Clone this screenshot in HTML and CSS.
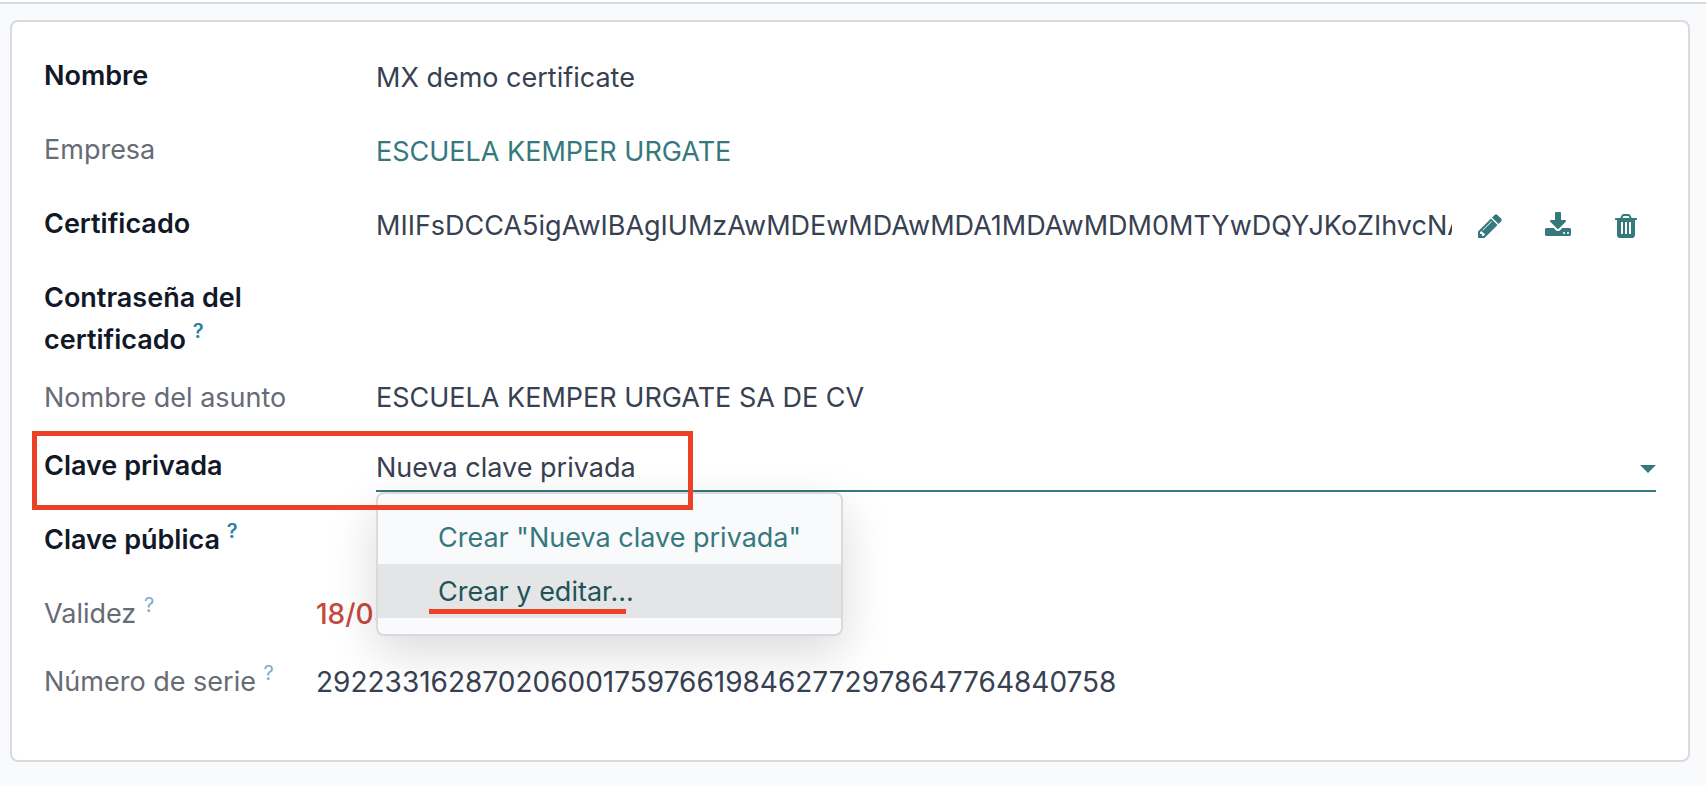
FILE: index.html
```html
<!DOCTYPE html>
<html lang="es">
<head>
<meta charset="utf-8">
<title>Certificado</title>
<link rel="stylesheet" href="styles.css">
</head>
<body>
<header class="topbar"></header>
<main class="sheet">
  <form class="form">
    <div class="row">
      <label class="label strong" for="name">Nombre</label>
      <input class="field" id="name" type="text" value="MX demo certificate">
    </div>
    <div class="row">
      <label class="label" for="company">Empresa</label>
      <input class="field link" id="company" type="text" value="ESCUELA KEMPER URGATE">
    </div>
    <div class="row">
      <label class="label strong" for="cert">Certificado</label>
      <div class="file">
        <input class="field" id="cert" type="text" readonly value="MIIFsDCCA5igAwIBAgIUMzAwMDEwMDAwMDA1MDAwMDM0MTYwDQYJKoZIhvcNAQELBQAwggEr">
        <button class="icon-btn" type="button" aria-label="Editar">
          <svg viewBox="0 0 1792 1792"><path d="M491 1536l91-91-235-235-91 91v107h128v128h107zm523-928q0-22-22-22-10 0-17 7l-542 542q-7 7-7 17 0 22 22 22 10 0 17-7l542-542q7-7 7-17zm-54-192l416 416-832 832h-416v-416zm683 96q0 53-37 90l-166 166-416-416 166-165q36-38 90-38 53 0 91 38l235 234q37 39 37 91z"/></svg>
        </button>
        <button class="icon-btn" type="button" aria-label="Descargar">
          <svg viewBox="0 0 1792 1792"><path d="M1344 1344q0-26-19-45t-45-19-45 19-19 45 19 45 45 19 45-19 19-45zm256 0q0-26-19-45t-45-19-45 19-19 45 19 45 45 19 45-19 19-45zm128-224v320q0 40-28 68t-68 28h-1472q-40 0-68-28t-28-68v-320q0-40 28-68t68-28h465l135 136q58 56 136 56t136-56l136-136h464q40 0 68 28t28 68zm-325-569q17 41-14 70l-448 448q-18 19-45 19t-45-19l-448-448q-31-29-14-70 17-39 59-39h256v-448q0-26 19-45t45-19h256q26 0 45 19t19 45v448h256q42 0 59 39z"/></svg>
        </button>
        <button class="icon-btn" type="button" aria-label="Borrar">
          <svg viewBox="0 0 1792 1792"><path d="M704 1376v-704q0-14-9-23t-23-9h-64q-14 0-23 9t-9 23v704q0 14 9 23t23 9h64q14 0 23-9t9-23zm256 0v-704q0-14-9-23t-23-9h-64q-14 0-23 9t-9 23v704q0 14 9 23t23 9h64q14 0 23-9t9-23zm256 0v-704q0-14-9-23t-23-9h-64q-14 0-23 9t-9 23v704q0 14 9 23t23 9h64q14 0 23-9t9-23zm-544-992h448l-48-117q-7-9-17-11h-317q-10 2-17 11zm928 32v64q0 14-9 23t-23 9h-96v948q0 83-47 143.500t-113 60.500h-832q-66 0-113-58.500t-47-141.500v-952h-96q-14 0-23-9t-9-23v-64q0-14 9-23t23-9h309l70-167q15-37 54-63t79-26h320q40 0 79 26t54 63l70 167h309q14 0 23 9t9 23z"/></svg>
        </button>
      </div>
    </div>
    <div class="row">
      <label class="label strong" for="pass">Contraseña del certificado <sup class="help">?</sup></label>
      <input class="field" id="pass" type="password">
    </div>
    <div class="row readonly">
      <span class="label">Nombre del asunto</span>
      <span class="value">ESCUELA KEMPER URGATE SA DE CV</span>
    </div>
    <div class="row">
      <label class="label strong" for="privkey">Clave privada</label>
      <div class="combo">
        <input class="field active" id="privkey" type="text" role="combobox" aria-expanded="true" aria-controls="options" value="Nueva clave privada">
        <svg class="caret" viewBox="0 0 16 8"><path d="M0 0h16L8 8z"/></svg>
        <div class="menu" id="options">
          <button class="option" type="button">Crear "Nueva clave privada"</button>
          <button class="option hover" type="button">Crear y editar...<span class="mark-line"></span></button>
        </div>
      </div>
      <div class="mark-box"></div>
    </div>
    <div class="row">
      <label class="label strong" for="pubkey">Clave pública <sup class="help">?</sup></label>
      <input class="field" id="pubkey" type="text">
    </div>
    <div class="row readonly compact">
      <span class="label">Validez <sup class="help">?</sup></span>
      <span class="value number expired">18/05</span>
    </div>
    <div class="row readonly compact">
      <span class="label">Número de serie <sup class="help">?</sup></span>
      <span class="value number">292233162870206001759766198462772978647764840758</span>
    </div>
  </form>
</main>
</body>
</html>
```
FILE: styles.css
```css
* { box-sizing: border-box; }

body {
  margin: 0;
  background: #f9fafc;
  color: #374151;
  font: 400 27px/42px Inter, "Liberation Sans", sans-serif;
}

.topbar {
  height: 4px;
  background: #fff;
  border-bottom: 2px solid #d8dadd;
}

.sheet {
  margin: 16px 16px 24px 10px;
  padding: 33px 32px 47px;
  background: #fff;
  border: 2px solid #d8dadd;
  border-radius: 8px;
}

.form {
  display: flex;
  flex-direction: column;
  gap: 16px;
}

.row {
  position: relative;
  display: grid;
  grid-template-columns: 332px minmax(0, 1fr);
  align-items: start;
  min-height: 58px;
}

.row.readonly { min-height: 52px; }
.row.compact { grid-template-columns: 272px minmax(0, 1fr); }

.label {
  padding-right: 32px;
  color: #666b75;
}

.compact .label { padding-right: 0; }

.label.strong {
  color: #111827;
  font-weight: 600;
}

.help {
  color: #7aafc8;
  font-size: 20px;
  line-height: 0;
  vertical-align: 11px;
}

.strong .help { color: #2f80a8; }

.field {
  display: block;
  width: 100%;
  min-width: 0;
  height: 47px;
  padding: 1px 0 2px;
  border: 0;
  border-bottom: 2px solid transparent;
  border-radius: 0;
  outline: 0;
  background: transparent;
  color: inherit;
  font: inherit;
}

.field.link { color: #35797d; }
.field.active { border-color: #35797d; }
.value.number { font-size: 28px; }
.value.expired { color: #c4493f; font-weight: 500; }

.file { display: flex; align-items: flex-start; }

.icon-btn {
  flex: none;
  padding: 9px 16px 9px 24px;
  border: 0;
  background: none;
  line-height: 0;
  cursor: pointer;
}

.icon-btn svg {
  width: 28px;
  height: 28px;
  fill: #35797d;
}

.combo { position: relative; }

.caret {
  position: absolute;
  top: 20px;
  right: 0;
  width: 16px;
  height: 8px;
  fill: #35797d;
}

.menu {
  position: absolute;
  z-index: 1;
  top: 100%;
  left: 0;
  min-width: 467px;
  padding: 16px 0;
  background: #f9fafc;
  border: 2px solid #d8dadd;
  border-radius: 8px;
  box-shadow: 0 16px 48px rgba(0, 0, 0, 0.15);
}

.option {
  position: relative;
  display: block;
  width: 100%;
  padding: 7px 32px 5px 60px;
  border: 0;
  background: none;
  color: #35797d;
  font: inherit;
  text-align: left;
  white-space: nowrap;
  cursor: pointer;
}

.option.hover {
  background: #e4e5e7;
  color: #1f5457;
}

.mark-line {
  position: absolute;
  bottom: 4px;
  left: 51px;
  width: 197px;
  height: 5px;
  background: #ec4126;
}

.mark-box {
  position: absolute;
  z-index: 2;
  top: -14px;
  left: -12px;
  width: 661px;
  height: 79px;
  border: 5px solid #ec4126;
  pointer-events: none;
}
```
